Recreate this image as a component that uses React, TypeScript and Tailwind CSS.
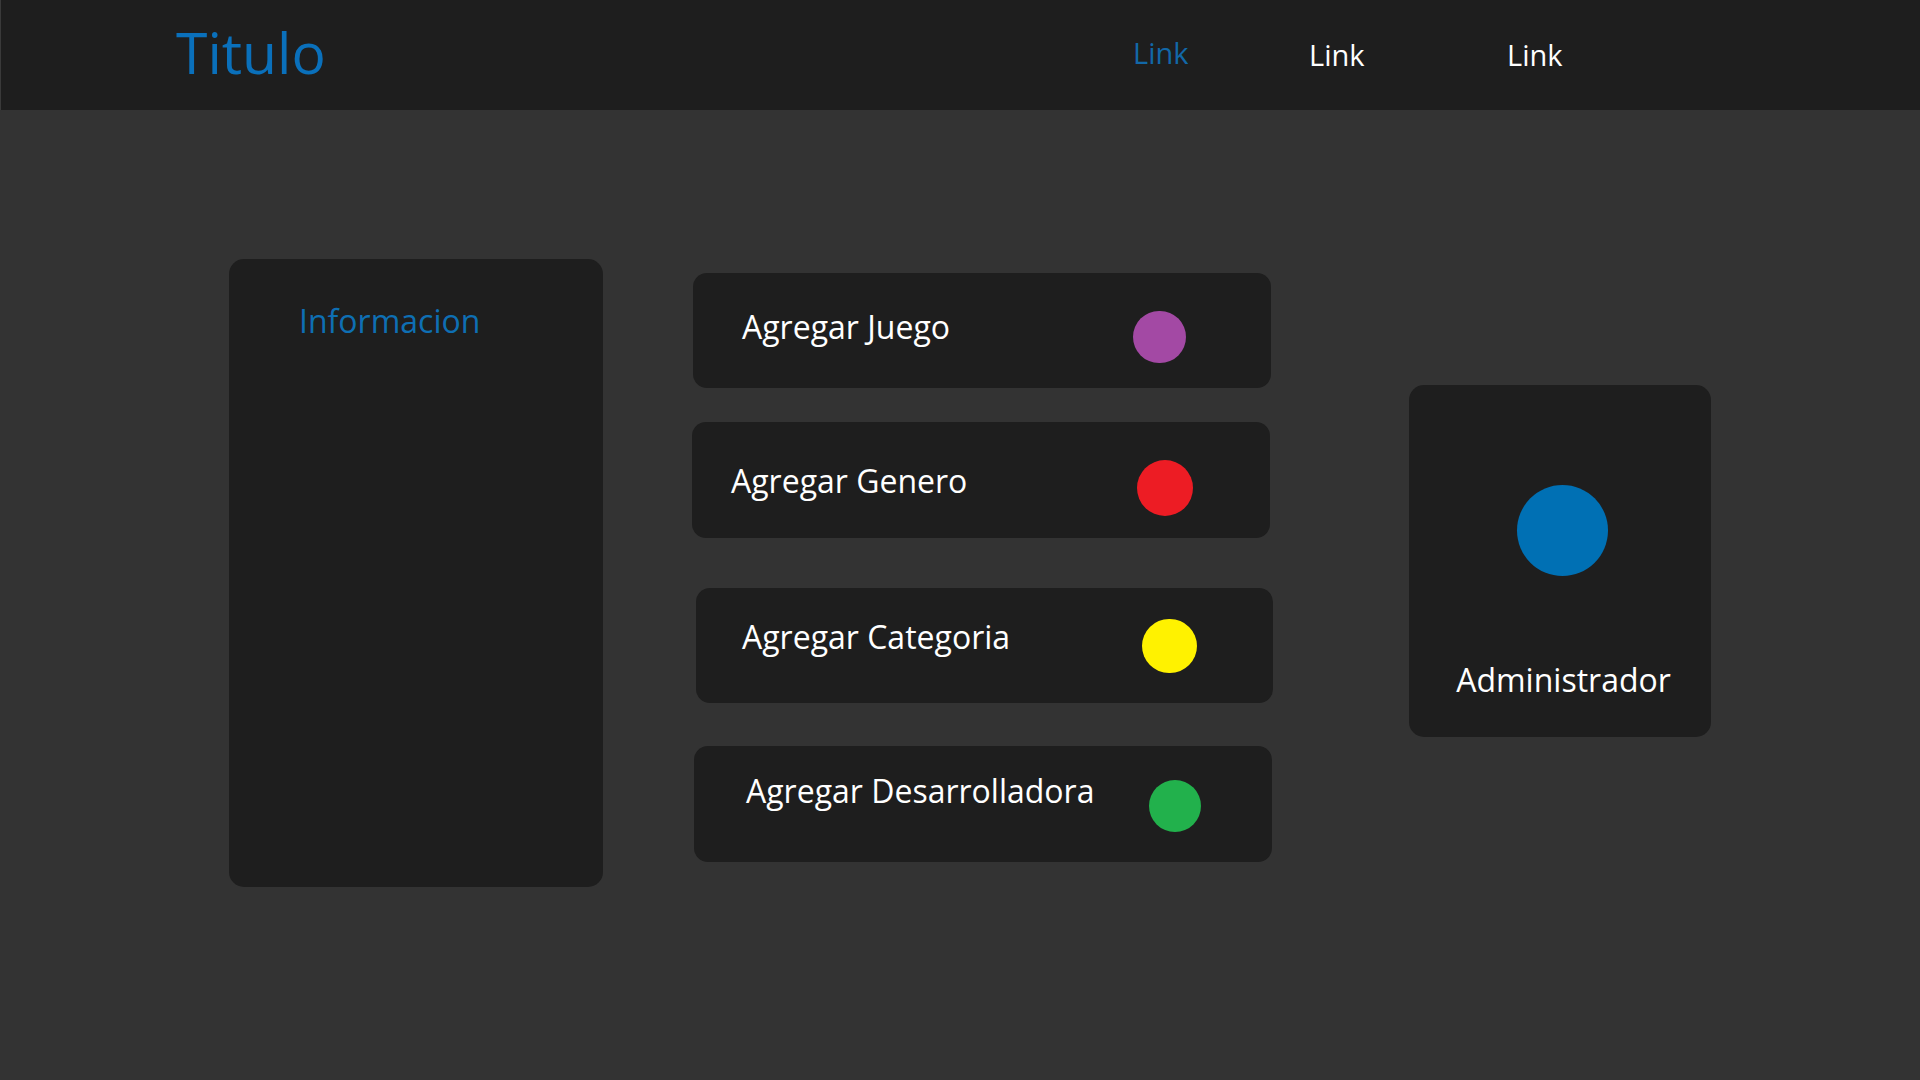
import React from "react";

const font = { fontFamily: '"Open Sans", "Noto Sans", sans-serif' };

export default function App() {
  return (
    <div className="min-h-screen w-full flex flex-col bg-[#333333]" style={font}>
      <header className="h-[110px] w-full bg-[#1e1e1e] border-l border-[#3a3a3a] flex items-start shrink-0">
        <div className="w-[1132px] pl-[175px]">
          <div className="mt-[24px] text-[57px] leading-none text-[#0a70bb]">Titulo</div>
        </div>
        <a className="mt-[38px] text-[29px] leading-none text-[#1268a8] w-[56px]">Link</a>
        <a className="mt-[40px] ml-[120px] text-[29px] leading-none text-white w-[56px]">Link</a>
        <a className="mt-[40px] ml-[142px] text-[29px] leading-none text-white w-[56px]">Link</a>
      </header>

      <main className="flex-1 flex items-start pl-[229px]">
        <section className="mt-[149px] w-[374px] h-[628px] rounded-[15px] bg-[#1e1e1e] pl-[70px] pt-[46px]">
          <h2 className="text-[32px] leading-none text-[#0e6fb3]">Informacion</h2>
        </section>

        <div className="mt-[163px] ml-[89px] flex flex-col w-[581px]">
          <div className="ml-[1px] w-[578px] h-[115px] rounded-[14px] bg-[#1e1e1e] flex items-start pl-[49px]">
            <span className="w-[391px] mt-[38px] text-[32px] leading-none text-white">Agregar Juego</span>
            <span className="mt-[38px] w-[53px] h-[52px] rounded-full bg-[#a349a4]" />
          </div>
          <div className="mt-[34px] w-[578px] h-[116px] rounded-[14px] bg-[#1e1e1e] flex items-start pl-[39px]">
            <span className="w-[406px] mt-[43px] text-[32px] leading-none text-white">Agregar Genero</span>
            <span className="mt-[38px] w-[56px] h-[56px] rounded-full bg-[#ed1c24]" />
          </div>
          <div className="mt-[50px] ml-[4px] w-[577px] h-[115px] rounded-[14px] bg-[#1e1e1e] flex items-start pl-[46px]">
            <span className="w-[400px] mt-[33px] text-[32px] leading-none text-white">Agregar Categoria</span>
            <span className="mt-[31px] w-[55px] h-[54px] rounded-full bg-[#fff200]" />
          </div>
          <div className="mt-[43px] ml-[2px] w-[578px] h-[116px] rounded-[14px] bg-[#1e1e1e] flex items-start pl-[52px]">
            <span className="w-[403px] mt-[29px] text-[32px] leading-none text-white">Agregar Desarrolladora</span>
            <span className="mt-[34px] w-[52px] h-[52px] rounded-full bg-[#22b14c]" />
          </div>
        </div>

        <section className="mt-[275px] ml-[136px] w-[302px] h-[352px] rounded-[15px] bg-[#1e1e1e] flex flex-col items-center pl-[7px]">
          <span className="mt-[100px] ml-[-3px] w-[91px] h-[91px] rounded-full bg-[#0070b4]" />
          <span className="mt-[88px] text-[32px] leading-none text-white">Administrador</span>
        </section>
      </main>
    </div>
  );
}
